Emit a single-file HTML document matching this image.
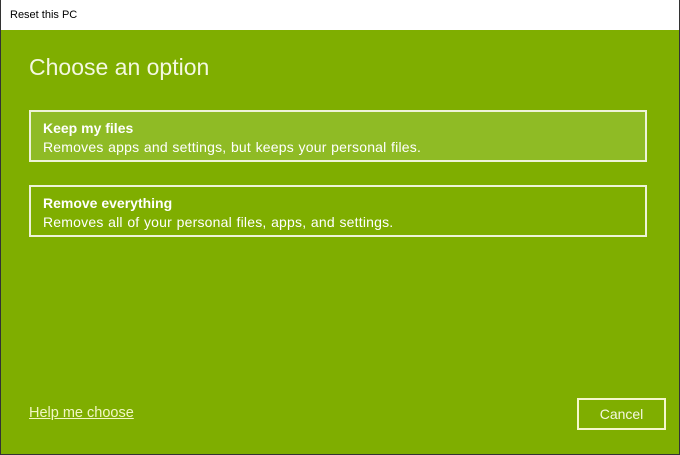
<!DOCTYPE html>
<html><head><style>
body{margin:0;width:680px;height:455px;overflow:hidden;font-family:"Liberation Sans",sans-serif;}
.win{position:absolute;left:0;top:0;width:678px;height:454px;border:1px solid #333;border-top:none;background:#7fae00;}
.title{position:absolute;left:0;top:0;width:678px;height:30px;background:#fff;font-size:11px;color:#000;}
.title span{position:absolute;left:9px;top:9px;}
h1{position:absolute;left:28px;top:54px;margin:0;font-weight:normal;font-size:23px;color:#f4f8e0;}
.box{position:absolute;left:28px;width:614px;height:48px;border:2px solid #eef3d8;color:#fff;font-size:14px;}
.box b{position:absolute;left:12px;top:8px;}
.box i{position:absolute;left:12px;top:27px;font-style:normal;letter-spacing:0.2px;word-spacing:0.5px;}
.help{position:absolute;left:28px;top:405px;font-size:14.5px;color:#f2f7c4;text-decoration:underline;}
.cancel{position:absolute;left:576px;top:398px;width:85px;height:28px;border:2px solid #f5f7cc;color:#f5f8e0;font-size:14px;text-align:center;line-height:28px;}
</style></head><body>
<div class="win">
<div class="title"><span>Reset this PC</span></div>
<h1>Choose an option</h1>
<div class="box" style="top:110px;background:#8fbb25"><b>Keep my files</b><i>Removes apps and settings, but keeps your personal files.</i></div>
<div class="box" style="top:185px"><b>Remove everything</b><i>Removes all of your personal files, apps, and settings.</i></div>
<div class="help">Help me choose</div>
<div class="cancel">Cancel</div>
</div>
</body></html>
